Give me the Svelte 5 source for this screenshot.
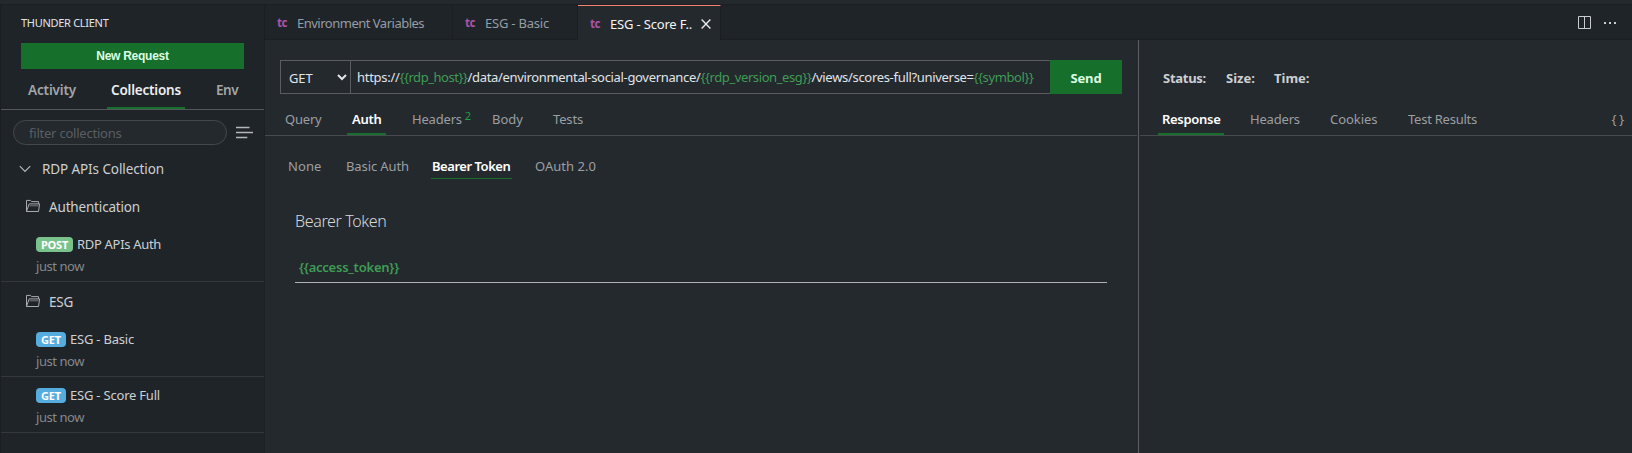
<script>
  const sideTabs = [
    { label: 'Activity', k: 'activity' },
    { label: 'Collections', k: 'collections', active: true },
    { label: 'Env', k: 'env' }
  ];
  const folders = [
    { name: 'Authentication', k: 'auth', items: [{ method: 'POST', name: 'RDP APIs Auth' }] },
    { name: 'ESG', k: 'esg', items: [{ method: 'GET', name: 'ESG - Basic' }, { method: 'GET', name: 'ESG - Score Full' }] }
  ];
  const editorTabs = [
    { label: 'Environment Variables', k: 'vars' },
    { label: 'ESG - Basic', k: 'basic' },
    { label: 'ESG - Score F..', k: 'score', active: true }
  ];
  const requestTabs = [
    { label: 'Query', k: 'query' },
    { label: 'Auth', k: 'authtab', active: true },
    { label: 'Headers', k: 'headers', count: 2 },
    { label: 'Body', k: 'bodytab' },
    { label: 'Tests', k: 'tests' }
  ];
  const authTypes = [
    { label: 'None', k: 'none' },
    { label: 'Basic Auth', k: 'basicauth' },
    { label: 'Bearer Token', k: 'bearer', active: true },
    { label: 'OAuth 2.0', k: 'oauth' }
  ];
  const responseTabs = [
    { label: 'Response', k: 'response', active: true },
    { label: 'Headers', k: 'rheaders' },
    { label: 'Cookies', k: 'cookies' },
    { label: 'Test Results', k: 'results' }
  ];
</script>

<div class="window">
  <aside>
    <div class="title">THUNDER CLIENT</div>
    <button class="new">New Request</button>
    <nav class="side-tabs">
      {#each sideTabs as t}<span class="{t.k}" class:active={t.active}>{t.label}</span>{/each}
    </nav>
    <div class="filter-row">
      <div class="filter">filter collections</div>
      <svg width="18" height="14" viewBox="0 0 18 14" stroke="#b4b6b8" stroke-width="1.3"><path d="M0 1.5h13.5M0 6.5h17M0 11.5h11.3" /></svg>
    </div>
    <div class="collection">
      <svg width="12" height="8" viewBox="0 0 12 8" fill="none" stroke="#b9bbbd" stroke-width="1.1"><path d="M.8 1.2 6 6.5l5.2-5.3" /></svg>
      <span>RDP APIs Collection</span>
    </div>
    {#each folders as f}
      <div class="folder {f.k}">
        <svg width="16" height="14" viewBox="0 0 16 14" fill="none" stroke="#a9abad" stroke-width="1"><path d="M1.5 12.5h12l1.1-7.6H4.2L1.5 12.5V1.4h4l1 1.2h7v2.3" /><path d="M4.6 6.8h8.8" stroke="#777b7e" /></svg>
        <span>{f.name}</span>
      </div>
      {#each f.items as r}
        <div class="request">
          <div class="line"><b class={r.method.toLowerCase()}>{r.method}</b><span class:tight={r.method === 'POST'}>{r.name}</span></div>
          <div class="when">just now</div>
        </div>
      {/each}
    {/each}
  </aside>

  <div class="main">
    <header>
      {#each editorTabs as t}
        <div class="etab e-{t.k}" class:active={t.active}>
          <i>tc</i><span>{t.label}</span>
          {#if t.active}<svg width="10" height="10" viewBox="0 0 10 10" stroke="#e8e9ea" stroke-width="1.4"><path d="M.6.6l8.8 8.8M9.4.6.6 9.4" /></svg>{/if}
        </div>
      {/each}
      <div class="actions">
        <svg width="14" height="13" viewBox="0 0 14 13" fill="none" stroke="#c9cdd1"><path d="M.5.5h12v12H.5zM6.5.5v12" /></svg>
        <svg width="14" height="4" viewBox="0 0 14 4" fill="#c9cdd1"><path d="M0 1h2v2H0zM5 1h2v2h-2zM10 1h2v2h-2z" /></svg>
      </div>
    </header>

    <div class="panes">
      <section class="req">
        <div class="urlbar">
          <div class="method"><span>GET</span>
            <svg width="10" height="7" viewBox="0 0 10 7" fill="none" stroke="#e1e4e8" stroke-width="2"><path d="M1 1l4 4 4-4" /></svg>
          </div>
          <div class="url"><span class="u1">https://</span><span class="v u2">{'{{rdp_host}}'}</span><span class="u3">/data/environmental-social-governance/</span><span class="v u4">{'{{rdp_version_esg}}'}</span><span class="u5">/views/scores-full?universe=</span><span class="v u6">{'{{symbol}}'}</span></div>
          <button class="send">Send</button>
        </div>
        <nav class="tabs">
          {#each requestTabs as t}
            <span class="tab {t.k}" class:active={t.active}>{t.label}{#if t.count}<sup>{t.count}</sup>{/if}</span>
          {/each}
        </nav>
        <nav class="auth-types">
          {#each authTypes as t}<span class={t.k} class:active={t.active}>{t.label}</span>{/each}
        </nav>
        <h3>Bearer Token</h3>
        <div class="token">{'{{access_token}}'}</div>
      </section>
      <section class="res">
        <div class="stats"><b class="s1">Status:</b><b class="s2">Size:</b><b class="s3">Time:</b></div>
        <nav class="tabs">
          {#each responseTabs as t}<span class="tab {t.k}" class:active={t.active}>{t.label}</span>{/each}
          <span class="braces">{'{ }'}</span>
        </nav>
      </section>
    </div>
  </div>
</div>

<style>
  :global(body) { background: #24292e; }
  * { box-sizing: border-box; }
  .window {
    display: flex; width: 1632px; height: 453px; margin: 0; overflow: hidden;
    border-top: 4px solid #24292e; background: #24292e; color: #cdd0d3;
    font: 13px/18px "Noto Sans", sans-serif; white-space: nowrap;
  }
  button { border: 0; padding: 0; background: #176f2c; color: #dcffe4; }
  svg { flex: none; display: block; }

  aside {
    width: 265px; flex: none; background: #1f2428;
    border: 1px solid #1b1f23; border-bottom: 0;
    display: flex; flex-direction: column;
  }
  .title { padding: 9px 0 0 20px; height: 38px; font-size: 11px; letter-spacing: -.29px; color: #e1e4e8; }
  .new { margin: 0 20px 0 20px; width: 223px; height: 26px; font: 700 12px "Liberation Sans", sans-serif; letter-spacing: -.26px; }
  .side-tabs { height: 41px; display: flex; padding: 12px 0 0 27px; border-bottom: 1px solid #55595c; font-weight: 600; font-size: 13.5px; color: #a3a6a8; }
  .side-tabs span { height: 28px; }
  .activity { width: 79px; letter-spacing: -.15px; }
  .collections { width: 78px; padding-left: 4px; letter-spacing: -.2px; }
  .side-tabs .active { color: #eceeef; border-bottom: 2px solid #176f2c; }
  .env { margin-left: 31px; letter-spacing: -.51px; }
  .filter-row { display: flex; align-items: center; gap: 9px; padding: 10px 0 0 12px; height: 35px; }
  .filter { width: 214px; height: 25px; border: 1px solid #44484b; border-radius: 13px; background: #24292e; padding: 3px 0 0 15px; color: #5a5e61; letter-spacing: -.22px; }
  .collection { display: flex; align-items: center; gap: 11px; padding-left: 18px; height: 44px; font-size: 13.5px; letter-spacing: -.1px; margin-top: 2px; }
  .folder { display: flex; align-items: center; gap: 7px; padding-left: 25px; height: 31px; font-size: 13.5px; letter-spacing: -.17px; }
  .folder svg { margin: -2px 1px 0 -1px; }
  .folder.esg { height: 40px; letter-spacing: -.25px; }
  .request { height: 56px; padding: 9px 0 0 35px; border-bottom: 1px solid #34383b; }
  .auth + .request { height: 60px; padding-top: 13px; }
  .esg + .request { height: 55px; padding-top: 8px; }
  .line { display: flex; height: 18px; align-items: center; letter-spacing: -.21px; }
  .line span { margin-left: 4px; }
  .line .tight { letter-spacing: -.31px; }
  .line b { height: 15px; border-radius: 4px; font-size: 11px; line-height: 15px; text-align: center; color: #fff; background: #55addf; width: 30px; }
  .line b.post { width: 37px; background: #7ac28b; }
  .when { margin-top: 4px; letter-spacing: -.44px; color: #85888b; }

  .main { flex: 1; display: flex; flex-direction: column; }
  header { display: flex; height: 36px; background: #1f2428; border-top: 1px solid #1b1f23; border-bottom: 1px solid #1b1f23; }
  .etab { display: flex; align-items: center; height: 34px; padding: 2px 0 1px 12px; border-right: 1px solid #1b1f23; color: #959da5; flex: none; }
  .etab i { font: 700 11.5px/18px "Noto Sans", sans-serif; color: #ab53a5; width: 20px; letter-spacing: -.4px; }
  .e-vars { width: 188px; letter-spacing: -.5px; }
  .e-basic { width: 125px; letter-spacing: -.21px; }
  .e-score { width: 143px; letter-spacing: -.18px; }
  .etab.active { height: 35px; background: #24292e; color: #f3f4f5; border-top: 1px solid #f9826c; }
  .etab svg { margin-left: 9px; }
  .actions { margin-left: auto; display: flex; align-items: center; gap: 12px; padding: 0 14px 0 0; margin-top: 1px; }

  .panes { flex: 1; display: flex; }
  .req { width: 874px; flex: none; border-right: 2px solid #24292e; }
  .urlbar { display: flex; height: 34px; margin: 20px 16px 0 15px; border: 1px solid #5a5c5f; border-right: 0; width: 842px; }
  .method { display: flex; align-items: center; width: 70px; border-right: 1px solid #5a5c5f; padding: 2px 0 0 8px; color: #e1e4e8; letter-spacing: -.14px; }
  .method svg { margin: -2px 0 0 24px; }
  .url { flex: 1; display: flex; align-items: center; padding-left: 6px; color: #e1e4e8; }
  .url span { flex: none; }
  .url .v { color: #3f9c54; }
  .u1 { width: 42.5px; letter-spacing: -.28px; }
  .u2 { width: 68px; letter-spacing: -.46px; }
  .u3 { width: 233px; letter-spacing: -.33px; }
  .u4 { width: 111px; letter-spacing: -.41px; }
  .u5 { width: 162px; letter-spacing: -.31px; }
  .u6 { letter-spacing: -.39px; }
  .send { width: 72px; margin: -1px 0; padding-top: 1px; font: 700 13px "Noto Sans", sans-serif; letter-spacing: -.1px; }
  .tabs { display: flex; height: 42px; border-bottom: 1px solid #484b4e; padding: 16px 0 0 15px; color: #9c9fa2; }
  .tab { height: 25px; padding: 0 5px; margin-right: 25px; flex: none; }
  .tabs .active { color: #fff; font-weight: 600; border-bottom: 2px solid #176f2c; }
  .query { width: 42px; letter-spacing: -.2px; }
  .authtab { width: 39px; letter-spacing: -.3px; margin-right: 21px; }
  .headers { width: 55px; letter-spacing: -.19px; }
  .bodytab { width: 36px; }
  .tests { letter-spacing: -.16px; }
  sup { font-size: 11px; line-height: 10px; color: #22a045; margin-left: 3px; vertical-align: 4px; }
  .auth-types { display: flex; padding: 21px 0 0 23px; color: #9c9fa2; height: 43px; }
  .auth-types .active { color: #fff; font-weight: 600; border-bottom: 1px solid #176f2c; }
  .none { width: 58px; letter-spacing: .1px; }
  .basicauth { width: 85px; letter-spacing: -.1px; }
  .bearer { width: 81px; padding-left: 1px; letter-spacing: -.46px; }
  .oauth { margin-left: 23px; letter-spacing: .03px; }
  h3 { margin: 31px 0 0 30px; font: 300 16px/22px "Noto Sans", sans-serif; letter-spacing: -.37px; color: #d6d9dc; }
  .token { margin: 22px 0 0 30px; padding: 4px 0 0 4px; width: 812px; height: 29px; border-bottom: 1px solid #b0b1b2; font-weight: 600; letter-spacing: -.23px; color: #3f9c54; }

  .res { flex: 1; border-left: 1px solid #5d5f62; margin-left: -1px; }
  .stats { display: flex; height: 54px; padding: 29px 0 0 24px; }
  .s1 { width: 63px; letter-spacing: -.27px; }
  .s2 { width: 48px; }
  .res .tabs { padding-left: 18px; margin-left: 1px; }
  .res .tab { padding: 0 4px; margin-right: 22px; }
  .response { width: 66px; letter-spacing: -.3px; }
  .rheaders { width: 58px; letter-spacing: -.19px; }
  .cookies { width: 56px; letter-spacing: -.05px; }
  .results { letter-spacing: -.24px; }
  .braces { margin-left: auto; margin-right: 8px; letter-spacing: -.25px; }
</style>
